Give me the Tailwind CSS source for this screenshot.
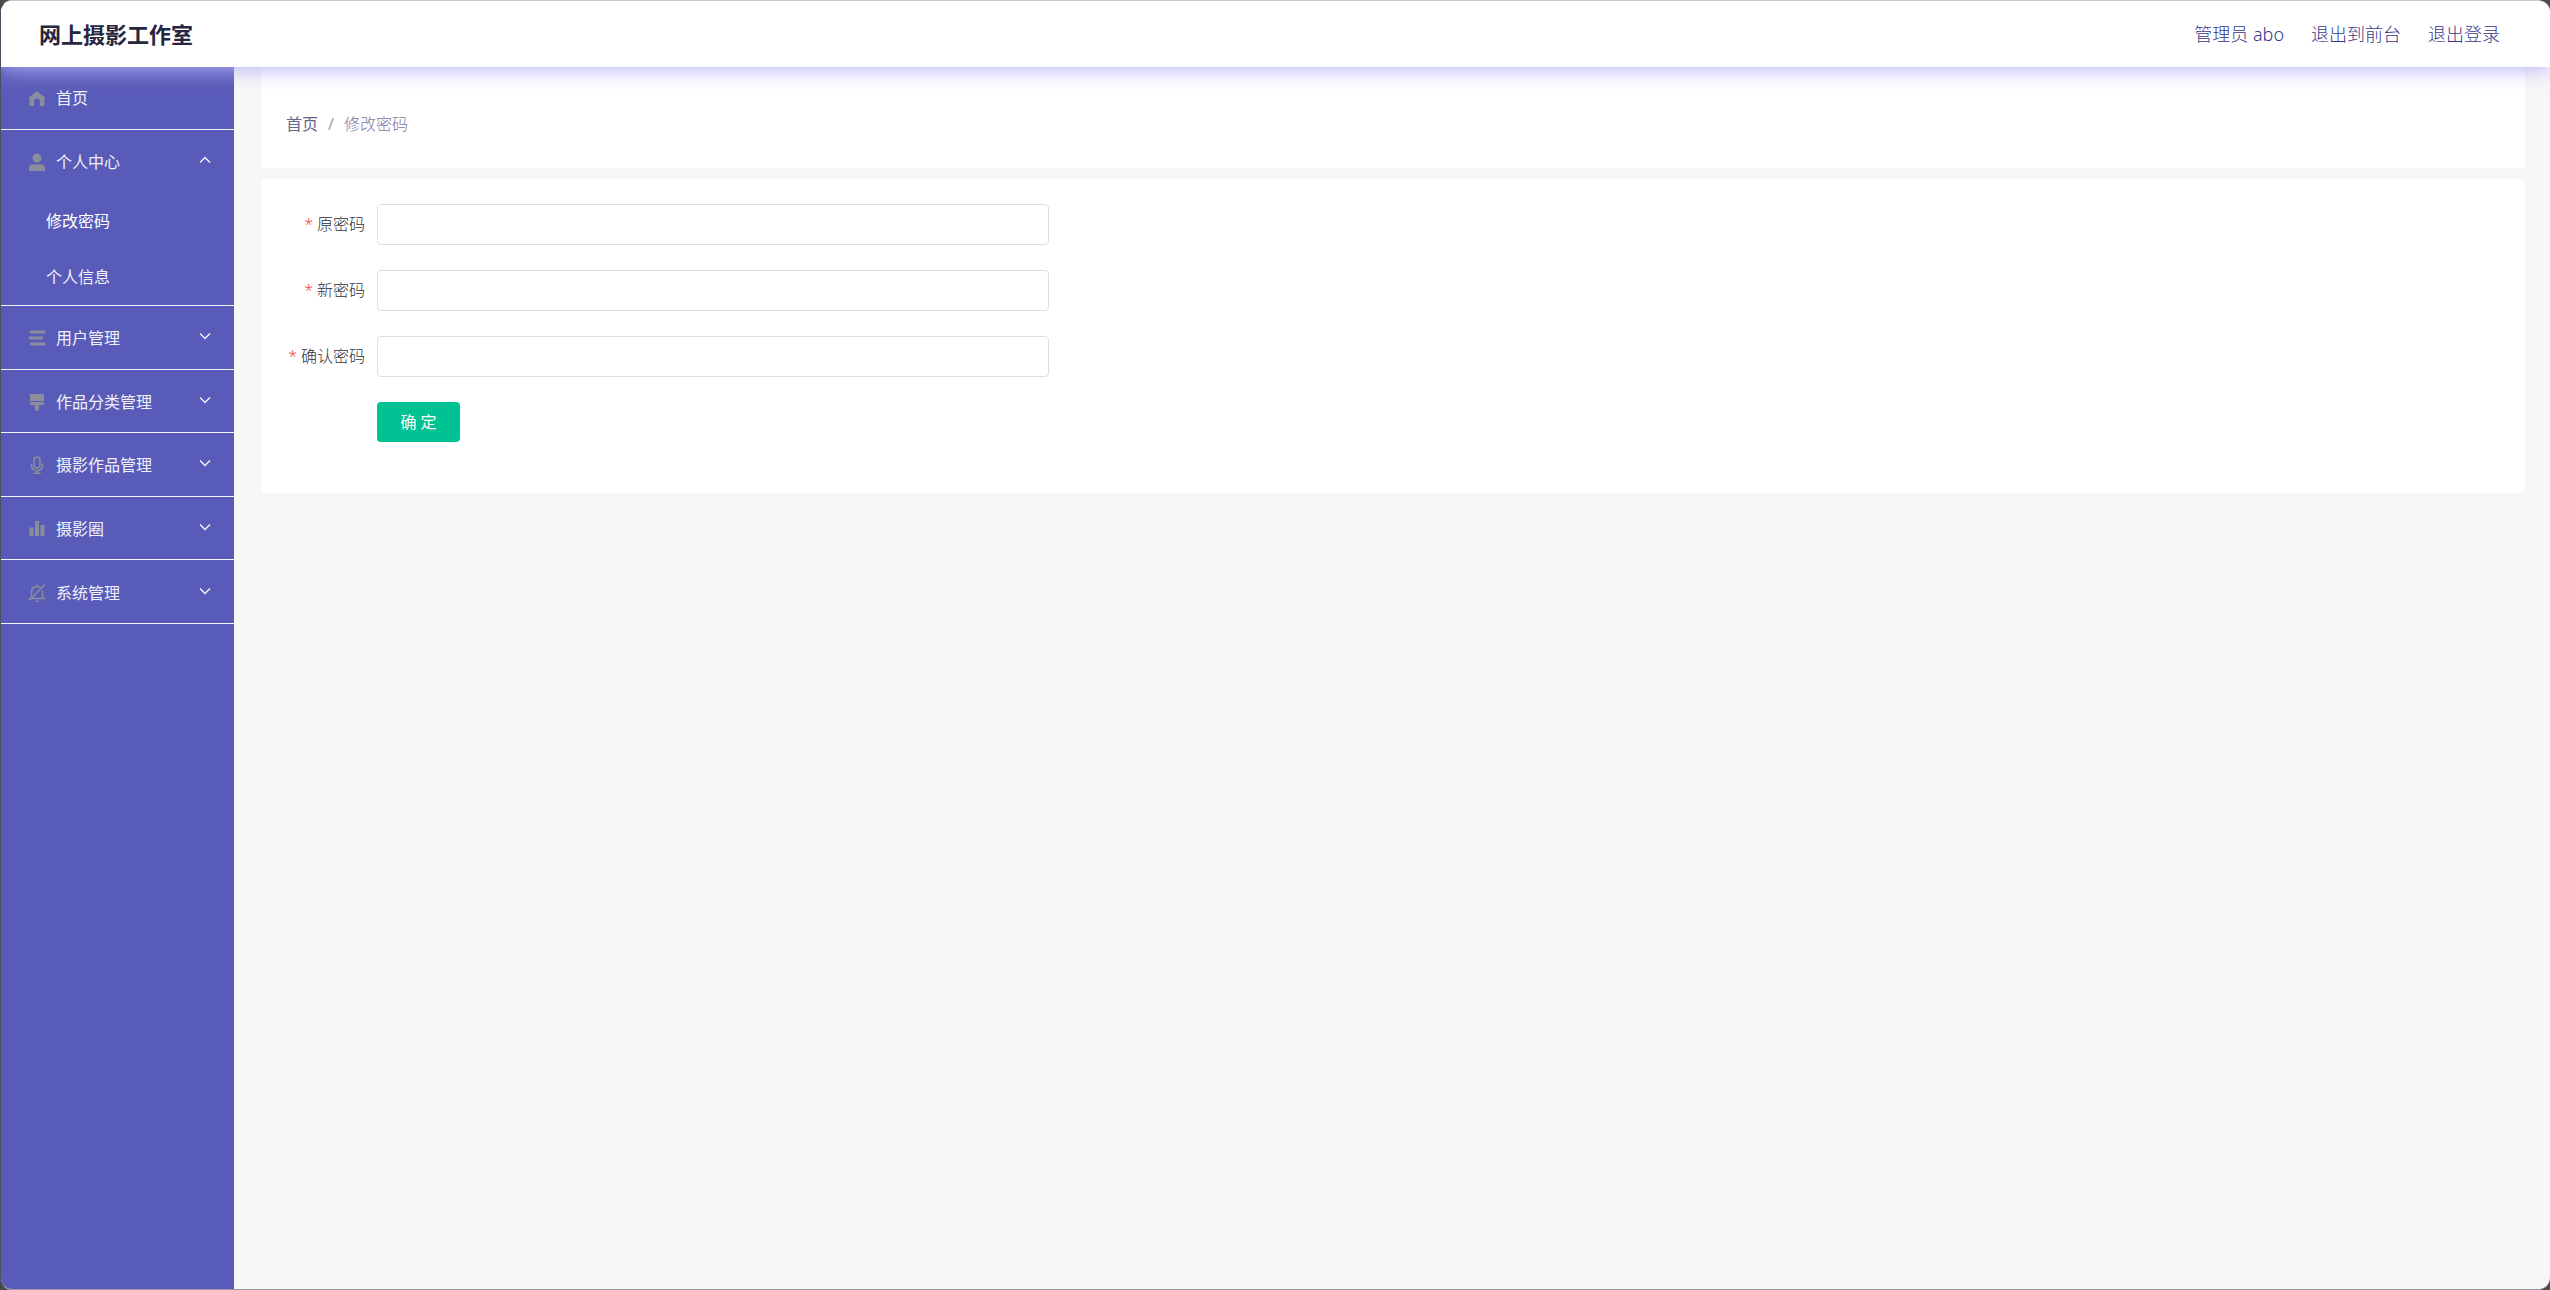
<!DOCTYPE html>
<html lang="zh-CN">
<head>
<meta charset="utf-8">
<title>网上摄影工作室</title>
<script src="https://cdn.jsdelivr.net/npm/@tailwindcss/browser@4"></script>
</head>
<body class="bg-[#4a4a4e] font-['Noto_Sans','Noto_Sans_CJK_SC',sans-serif] text-base">
<div class="flex min-h-screen flex-col overflow-hidden rounded-xl border border-r-0 border-t-[#c8c8c8] border-b-[#9a9a9a] border-l-[#4d4d60] bg-[#f7f7f7]">
  <header class="relative z-10 flex h-[66px] shrink-0 items-center justify-between bg-white pr-[50px] pl-[38px] shadow-[0_2px_20px_#b4b0f8]">
    <h1 class="text-[22px] leading-8 font-bold text-[#26263f]">网上摄影工作室</h1>
    <nav class="flex gap-[27px] text-lg leading-8 font-light text-[#38388a]">
      <span>管理员 abo</span>
      <a href="#">退出到前台</a>
      <a href="#">退出登录</a>
    </nav>
  </header>
  <div class="flex flex-1">
    <aside class="w-[233px] shrink-0 bg-[#595bb8] text-[#f0f0fa]">
      <a href="#" class="flex h-[63px] items-center gap-2.5 border-b border-[#f4f4fb] pl-[27px]">
        <svg class="size-[18px] text-[#8b8d9c]" viewBox="0 0 18 18" fill="currentColor"><path d="M9 2 17 8.500Q18 10 16.500 10.200V15.500Q16.500 17 15 17H12V12.500a3 3 0 0 0-6 0V17H3Q1.500 17 1.500 15.500V10.200Q0 10 1 8.500Z"/></svg>
        <span>首页</span>
      </a>
      <div class="h-[176px] border-b border-[#f4f4fb]">
        <button type="button" class="flex h-[63px] w-full items-center gap-2.5 pr-[23px] pl-[27px]">
          <svg class="size-[18px] text-[#8b8d9c]" viewBox="0 0 18 18" fill="currentColor"><circle cx="9" cy="5" r="4.500"/><path d="M1 18V15a3.500 3.500 0 0 1 3.500-3.500h9a3.500 3.500 0 0 1 3.500 3.500V18Z"/></svg>
          <span>个人中心</span>
          <svg class="mb-1 ml-auto size-3" viewBox="0 0 12 12" fill="none" stroke="currentColor" stroke-width="1.500"><path d="M1 8.500 6 3.500 11 8.500"/></svg>
        </button>
        <a href="#" class="flex h-14 items-center pl-[45px] text-white">修改密码</a>
        <a href="#" class="flex h-14 items-center pl-[45px]">个人信息</a>
      </div>
      <div class="grid h-[318px] auto-rows-fr">
        <button type="button" class="flex items-center gap-2.5 border-b border-[#f4f4fb] pt-0.5 pr-[23px] pl-[27px]">
          <svg class="size-[18px] text-[#8b8d9c]" viewBox="0 0 18 18" fill="none" stroke="currentColor" stroke-width="2.800" stroke-linecap="round"><path d="M3 3h13M2 9h12M3 15h13"/></svg>
          <span>用户管理</span>
          <svg class="mb-1 ml-auto size-3" viewBox="0 0 12 12" fill="none" stroke="currentColor" stroke-width="1.500"><path d="M1 3.500 6 8.500 11 3.500"/></svg>
        </button>
        <button type="button" class="flex items-center gap-2.5 border-b border-[#f4f4fb] pt-0.5 pr-[23px] pl-[27px]">
          <svg class="size-[18px] text-[#8b8d9c]" viewBox="0 0 18 18" fill="currentColor"><path d="M2 1H16V8H2ZM2 9H16V11Q16 12 15 12H11V17Q9 19 7 17V12H3Q2 12 2 11Z"/></svg>
          <span>作品分类管理</span>
          <svg class="mb-1 ml-auto size-3" viewBox="0 0 12 12" fill="none" stroke="currentColor" stroke-width="1.500"><path d="M1 3.500 6 8.500 11 3.500"/></svg>
        </button>
        <button type="button" class="flex items-center gap-2.5 border-b border-[#f4f4fb] pt-0.5 pr-[23px] pl-[27px]">
          <svg class="size-[18px] text-[#8b8d9c]" viewBox="0 0 18 18" fill="none" stroke="currentColor" stroke-width="1.500" stroke-linecap="round"><rect x="6" y="1" width="6" height="11" rx="3"/><path d="M3.500 8v1.500a5.500 5.500 0 0 0 11 0V8M9 15v2.200M6 17.300h6"/></svg>
          <span>摄影作品管理</span>
          <svg class="mb-1 ml-auto size-3" viewBox="0 0 12 12" fill="none" stroke="currentColor" stroke-width="1.500"><path d="M1 3.500 6 8.500 11 3.500"/></svg>
        </button>
        <button type="button" class="flex items-center gap-2.5 border-b border-[#f4f4fb] pt-0.5 pr-[23px] pl-[27px]">
          <svg class="size-[18px] text-[#8b8d9c]" viewBox="0 0 18 18" fill="currentColor"><path d="M1.500 7.500h4V16h-4ZM7 1h4v15H7ZM12.500 5h4v11h-4Z"/></svg>
          <span>摄影圈</span>
          <svg class="mb-1 ml-auto size-3" viewBox="0 0 12 12" fill="none" stroke="currentColor" stroke-width="1.500"><path d="M1 3.500 6 8.500 11 3.500"/></svg>
        </button>
        <button type="button" class="flex items-center gap-2.5 border-b border-[#f4f4fb] pt-0.5 pr-[23px] pl-[27px]">
          <svg class="size-[18px] text-[#8b8d9c]" viewBox="0 0 18 18" fill="none" stroke="currentColor" stroke-width="1.500" stroke-linecap="round"><path d="M1 14.500h16M3.500 12.500V8a5.500 5.500 0 0 1 9-4.300M14.500 7v7.500M1.500 16 16.500 1M8 17.200h2M9 1v1.300"/></svg>
          <span>系统管理</span>
          <svg class="mb-1 ml-auto size-3" viewBox="0 0 12 12" fill="none" stroke="currentColor" stroke-width="1.500"><path d="M1 3.500 6 8.500 11 3.500"/></svg>
        </button>
      </div>
    </aside>
    <main class="flex flex-1 flex-col gap-[11px] pr-[25px] pl-[27px]">
      <nav aria-label="面包屑" class="flex h-[101px] items-center rounded-sm bg-white px-[25px] pt-3">
        <ol class="flex leading-6">
          <li><a href="#" class="text-[#66668c]">首页</a></li>
          <li class="px-2.5 text-[#9a9aa8]">/</li>
          <li class="font-light text-[#7878a8]">修改密码</li>
        </ol>
      </nav>
      <form class="flex h-[314px] flex-col gap-[25px] rounded-sm bg-white px-[25px] pt-[25px]">
        <div class="flex">
          <label for="old" class="w-[91px] shrink-0 pr-3 text-right leading-10 font-light text-[#303034]"><span class="mr-1 text-[#f04a4a]">*</span>原密码</label>
          <input id="old" type="password" class="h-[41px] w-[672px] rounded border border-[#dedee2] bg-white px-4">
        </div>
        <div class="flex">
          <label for="new" class="w-[91px] shrink-0 pr-3 text-right leading-10 font-light text-[#303034]"><span class="mr-1 text-[#f04a4a]">*</span>新密码</label>
          <input id="new" type="password" class="h-[41px] w-[672px] rounded border border-[#dedee2] bg-white px-4">
        </div>
        <div class="flex">
          <label for="confirm" class="w-[91px] shrink-0 pr-3 text-right leading-10 font-light text-[#303034]"><span class="mr-1 text-[#f04a4a]">*</span>确认密码</label>
          <input id="confirm" type="password" class="h-[41px] w-[672px] rounded border border-[#dedee2] bg-white px-4">
        </div>
        <button type="submit" class="ml-[91px] h-10 w-[83px] rounded bg-[#00c292] text-white">确 定</button>
      </form>
    </main>
  </div>
</div>
</body>
</html>
